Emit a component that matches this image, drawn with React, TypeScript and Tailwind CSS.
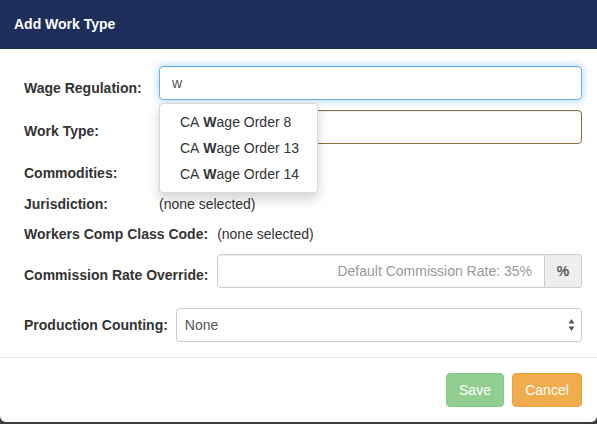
import React from "react";

const font = { fontFamily: '"Liberation Sans", Arial, Helvetica, sans-serif' };

function Label({ children, className = "" }: { children: React.ReactNode; className?: string }) {
  return (
    <div className={`text-[14px] font-bold leading-[20px] text-[#333] shrink-0 ${className}`}>{children}</div>
  );
}

export default function App() {
  const items = ["8", "13", "14"];
  return (
    <div className="w-[597px] h-[424px] bg-[#3b3b3b] overflow-hidden" style={font}>
      <div className="w-[597px] h-[422px] bg-white rounded-b-[6px] flex flex-col">
        <div className="h-[49px] bg-[#1c2e59] px-[14px] flex items-center">
          <span className="text-white text-[14px] font-bold">Add Work Type</span>
        </div>
        <div className="pt-[17px] pb-[15px] pl-[24px] pr-[15px] flex flex-col">
          {/* Wage Regulation */}
          <div className="flex items-center h-[34px]">
            <Label className="w-[135px] pt-[10px]">Wage Regulation:</Label>
            <div className="relative flex-1 h-[34px]">
              <div className="h-[34px] rounded-[4px] border border-[#66afe9] shadow-[inset_0_1px_1px_rgba(0,0,0,0.075),0_0_8px_rgba(102,175,233,0.6)] px-[12px] flex items-center text-[14px] text-[#555]">
                w
              </div>
              <div className="absolute z-10 left-0 top-[37px] w-[159px] bg-white border border-[rgba(0,0,0,0.15)] rounded-[4px] shadow-[0_6px_12px_rgba(0,0,0,0.175)] py-[5px]">
                {items.map((n) => (
                  <div key={n} className="h-[26px] px-[20px] flex items-center text-[14px] text-[#333] whitespace-nowrap">
                    CA&nbsp;<b>W</b>age Order {n}
                  </div>
                ))}
              </div>
            </div>
          </div>
          {/* Work Type */}
          <div className="flex items-center h-[34px] mt-[10px]">
            <Label className="w-[135px] pt-[8px]">Work Type:</Label>
            <div className="flex-1 h-[34px] rounded-[4px] border border-[#8a6d3b] shadow-[inset_0_1px_1px_rgba(0,0,0,0.075)]" />
          </div>
          {/* Commodities */}
          <div className="flex items-center h-[20px] mt-[19px]">
            <Label className="w-[136px]">Commodities:</Label>
            <span className="text-[14px] text-[#333]">(none selected)</span>
          </div>
          {/* Jurisdiction */}
          <div className="flex items-center h-[20px] mt-[11px]">
            <Label className="w-[135px]">Jurisdiction:</Label>
            <span className="text-[14px] text-[#333]">(none selected)</span>
          </div>
          {/* Workers Comp */}
          <div className="flex items-center h-[20px] mt-[10px] gap-[9px]">
            <Label>Workers Comp Class Code:</Label>
            <span className="text-[14px] text-[#333]">(none selected)</span>
          </div>
          {/* Commission */}
          <div className="flex items-center h-[34px] mt-[10px] gap-[9px]">
            <Label className="pt-[8px]">Commission Rate Override:</Label>
            <div className="flex-1 flex h-[34px]">
              <div className="flex-1 h-[34px] border border-[#ccc] rounded-l-[4px] px-[12px] flex items-center justify-end text-[14px] text-[#999] shadow-[inset_0_1px_1px_rgba(0,0,0,0.075)]">
                Default Commission Rate: 35%
              </div>
              <div className="w-[37px] h-[34px] border border-l-0 border-[#ccc] rounded-r-[4px] bg-[#eee] flex items-center justify-center text-[14px] font-bold text-[#555]">
                %
              </div>
            </div>
          </div>
          {/* Production */}
          <div className="flex items-center h-[34px] mt-[20px] gap-[8px]">
            <Label>Production Counting:</Label>
            <div className="flex-1 h-[34px] border border-[#ccc] rounded-[4px] pl-[8px] pr-[6px] flex items-center justify-between text-[14px] text-[#555]">
              <span>None</span>
              <svg width="7" height="14" viewBox="0 0 7 14">
                <polygon points="3.5,1 6.5,5.5 0.5,5.5" fill="#555" />
                <polygon points="3.5,13 6.5,8.5 0.5,8.5" fill="#555" />
              </svg>
            </div>
          </div>
        </div>
        <div className="border-t border-[#e5e5e5] p-[15px] flex justify-end gap-[8px]">
          <button className="w-[58px] h-[34px] rounded-[4px] bg-[#91cf91] border border-[#82c782] text-white text-[14px]">
            Save
          </button>
          <button className="w-[70px] h-[34px] rounded-[4px] bg-[#f0ad4e] border border-[#eea236] text-white text-[14px]">
            Cancel
          </button>
        </div>
      </div>
    </div>
  );
}
